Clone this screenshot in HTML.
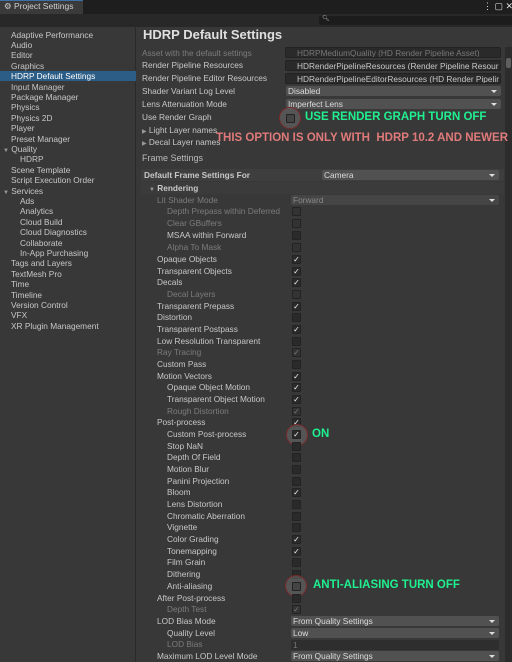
<!DOCTYPE html>
<html><head><meta charset="utf-8"><style>
*{margin:0;padding:0;box-sizing:border-box}
body{width:512px;height:662px;background:#383838;font-family:"Liberation Sans",sans-serif;font-size:8.3px;color:#c8c8c8;position:relative;overflow:hidden}
.a{position:absolute;white-space:nowrap;line-height:11px}
.s{left:11px}
.d{color:#7c7c7c}
.cb{position:absolute;left:292px;width:9px;height:9px;background:#2a2a2a;border:1px solid #232323;border-radius:1px;color:#eee;font-size:8px;line-height:8px;text-align:center}
.cb.dm{background:#333;color:#777}
.dd{position:absolute;left:291px;width:208px;height:10px;background:#515151;border-radius:2px;line-height:10px;padding-left:2px;color:#ddd}
.dd:after{content:"";position:absolute;right:4px;top:4px;border-left:3px solid transparent;border-right:3px solid transparent;border-top:3px solid #ddd}
.dd.dis{background:#454545;color:#888}
.fld{position:absolute;left:285px;width:216px;height:11px;background:#2a2a2a;border:1px solid #222;border-radius:2px;line-height:10px;padding-left:11px;white-space:nowrap;overflow:hidden}
.g{position:absolute;white-space:nowrap;color:#1ff090;font-weight:bold;font-size:11.5px;line-height:13px;font-family:"Liberation Sans",sans-serif;transform-origin:0 0}
.ring{position:absolute;width:22px;height:22px;border-radius:50%;border:1.5px solid #7a2a2a;background:rgba(110,110,110,.55)}
</style></head><body>
<div style="position:absolute;left:0;top:0;width:512px;height:14px;background:#1e1e1e"></div>
<div style="position:absolute;left:0;top:0;width:83px;height:14px;background:#3a3a3a;border-top:1px solid #3d6fa8"></div>
<div class="a" style="left:4px;top:1px;color:#d0d0d0;font-size:8.5px">⚙ Project Settings</div>
<div class="a" style="left:483px;top:1px;color:#ddd;font-size:9px">⋮ ▢ ✕</div>
<div style="position:absolute;left:0;top:14px;width:512px;height:13px;background:#282828"></div>
<div style="position:absolute;left:319px;top:16px;width:193px;height:9px;background:#1c1c1c;border-radius:2px"></div>
<div class="a" style="left:322px;top:14px;font-size:6px;color:#aaa">🔍︎</div>
<div style="position:absolute;left:0;top:27px;width:136px;height:635px;background:#383838;border-right:1px solid #2a2a2a"></div>
<div style="position:absolute;left:0;top:71px;width:136px;height:10px;background:#2c5d87"></div>
<div class="a s" style="top:30px">Adaptive Performance</div>
<div class="a s" style="top:40px">Audio</div>
<div class="a s" style="top:50px">Editor</div>
<div class="a s" style="top:61px">Graphics</div>
<div class="a s" style="top:71px;color:#fff">HDRP Default Settings</div>
<div class="a s" style="top:82px">Input Manager</div>
<div class="a s" style="top:92px">Package Manager</div>
<div class="a s" style="top:102px">Physics</div>
<div class="a s" style="top:113px">Physics 2D</div>
<div class="a s" style="top:123px">Player</div>
<div class="a s" style="top:134px">Preset Manager</div>
<div class="a" style="left:3px;top:144px"><span style="font-size:6px;color:#999">▼</span> Quality</div>
<div class="a" style="left:20px;top:154px">HDRP</div>
<div class="a s" style="top:165px">Scene Template</div>
<div class="a s" style="top:175px">Script Execution Order</div>
<div class="a" style="left:3px;top:186px"><span style="font-size:6px;color:#999">▼</span> Services</div>
<div class="a" style="left:20px;top:196px">Ads</div>
<div class="a" style="left:20px;top:206px">Analytics</div>
<div class="a" style="left:20px;top:217px">Cloud Build</div>
<div class="a" style="left:20px;top:227px">Cloud Diagnostics</div>
<div class="a" style="left:20px;top:238px">Collaborate</div>
<div class="a" style="left:20px;top:248px">In-App Purchasing</div>
<div class="a s" style="top:258px">Tags and Layers</div>
<div class="a s" style="top:269px">TextMesh Pro</div>
<div class="a s" style="top:279px">Time</div>
<div class="a s" style="top:290px">Timeline</div>
<div class="a s" style="top:300px">Version Control</div>
<div class="a s" style="top:310px">VFX</div>
<div class="a s" style="top:321px">XR Plugin Management</div>

<div style="position:absolute;left:505px;top:47px;width:7px;height:615px;background:#2c2c2c"></div>
<div style="position:absolute;left:506px;top:58px;width:5px;height:10px;background:#5f5f5f;border-radius:2px"></div>

<div class="a" style="left:143px;top:27px;font-size:13px;line-height:16px;font-weight:bold;color:#e0e0e0">HDRP Default Settings</div>
<div class="a d" style="left:142px;top:48px">Asset with the default settings</div>
<div class="fld" style="top:47px;color:#777">HDRPMediumQuality (HD Render Pipeline Asset)</div>
<div class="a" style="left:142px;top:60px">Render Pipeline Resources</div>
<div class="fld" style="top:60px">HDRenderPipelineResources (Render Pipeline Resour</div>
<div class="a" style="left:142px;top:73px">Render Pipeline Editor Resources</div>
<div class="fld" style="top:73px">HDRenderPipelineEditorResources (HD Render Pipelir</div>
<div class="a" style="left:142px;top:86px">Shader Variant Log Level</div>
<div class="dd" style="left:286px;width:215px;top:86px">Disabled</div>
<div class="a" style="left:142px;top:99px">Lens Attenuation Mode</div>
<div class="dd" style="left:286px;width:215px;top:99px">Imperfect Lens</div>
<div class="a" style="left:142px;top:112px">Use Render Graph</div>
<div class="ring" style="left:279px;top:107px"></div>
<div class="cb" style="left:286px;top:114px;background:#444"></div>
<div class="g" style="left:305px;top:111px">USE RENDER GRAPH TURN OFF</div>
<div class="a" style="left:142px;top:125px"><span style="font-size:6px;color:#999">▶</span> Light Layer names</div>
<div class="a" style="left:142px;top:137px"><span style="font-size:6px;color:#999">▶</span> Decal Layer names</div>
<div class="g" style="left:216px;top:132px;color:#e07a7a">THIS OPTION IS ONLY WITH &nbsp;HDRP 10.2 AND NEWER</div>

<div class="a" style="left:142px;top:153px;font-size:9px;color:#bbb">Frame Settings</div>
<div style="position:absolute;left:141px;top:169px;width:363px;height:12px;background:#3e3e3e"></div>
<div class="a" style="left:144px;top:170px;font-weight:bold">Default Frame Settings For</div>
<div class="dd" style="left:322px;width:177px;top:170px">Camera</div>
<div style="position:absolute;left:141px;top:182px;width:363px;height:12px;background:#3b3b3b"></div>
<div class="a" style="left:149px;top:183px;font-weight:bold"><span style="font-size:6px;color:#999">▼</span> Rendering</div>

<div class="a d" style="left:157px;top:195px">Lit Shader Mode</div><div class="dd dis" style="top:195px">Forward</div>
<div class="a d" style="left:167px;top:206px">Depth Prepass within Deferred</div><div class="cb dm" style="top:207px"></div>
<div class="a d" style="left:167px;top:218px">Clear GBuffers</div><div class="cb dm" style="top:219px"></div>
<div class="a" style="left:167px;top:230px">MSAA within Forward</div><div class="cb" style="top:231px"></div>
<div class="a d" style="left:167px;top:242px">Alpha To Mask</div><div class="cb dm" style="top:243px"></div>
<div class="a" style="left:157px;top:254px">Opaque Objects</div><div class="cb" style="top:255px">✓</div>
<div class="a" style="left:157px;top:266px">Transparent Objects</div><div class="cb" style="top:267px">✓</div>
<div class="a" style="left:157px;top:277px">Decals</div><div class="cb" style="top:278px">✓</div>
<div class="a d" style="left:167px;top:289px">Decal Layers</div><div class="cb dm" style="top:290px"></div>
<div class="a" style="left:157px;top:301px">Transparent Prepass</div><div class="cb" style="top:302px">✓</div>
<div class="a" style="left:157px;top:312px">Distortion</div><div class="cb" style="top:313px"></div>
<div class="a" style="left:157px;top:324px">Transparent Postpass</div><div class="cb" style="top:325px">✓</div>
<div class="a" style="left:157px;top:336px">Low Resolution Transparent</div><div class="cb" style="top:337px"></div>
<div class="a d" style="left:157px;top:347px">Ray Tracing</div><div class="cb dm" style="top:348px">✓</div>
<div class="a" style="left:157px;top:359px">Custom Pass</div><div class="cb" style="top:360px"></div>
<div class="a" style="left:157px;top:371px">Motion Vectors</div><div class="cb" style="top:372px">✓</div>
<div class="a" style="left:167px;top:382px">Opaque Object Motion</div><div class="cb" style="top:383px">✓</div>
<div class="a" style="left:167px;top:394px">Transparent Object Motion</div><div class="cb" style="top:395px">✓</div>
<div class="a d" style="left:167px;top:406px">Rough Distortion</div><div class="cb dm" style="top:407px">✓</div>
<div class="a" style="left:157px;top:417px">Post-process</div><div class="cb" style="top:418px">✓</div>
<div class="ring" style="left:286px;top:424px"></div>
<div class="a" style="left:167px;top:429px">Custom Post-process</div><div class="cb" style="top:430px">✓</div>
<div class="g" style="left:312px;top:428px">ON</div>
<div class="a" style="left:167px;top:441px">Stop NaN</div><div class="cb" style="top:442px"></div>
<div class="a" style="left:167px;top:452px">Depth Of Field</div><div class="cb" style="top:453px"></div>
<div class="a" style="left:167px;top:464px">Motion Blur</div><div class="cb" style="top:465px"></div>
<div class="a" style="left:167px;top:476px">Panini Projection</div><div class="cb" style="top:477px"></div>
<div class="a" style="left:167px;top:487px">Bloom</div><div class="cb" style="top:488px">✓</div>
<div class="a" style="left:167px;top:499px">Lens Distortion</div><div class="cb" style="top:500px"></div>
<div class="a" style="left:167px;top:511px">Chromatic Aberration</div><div class="cb" style="top:512px"></div>
<div class="a" style="left:167px;top:522px">Vignette</div><div class="cb" style="top:523px"></div>
<div class="a" style="left:167px;top:534px">Color Grading</div><div class="cb" style="top:535px">✓</div>
<div class="a" style="left:167px;top:546px">Tonemapping</div><div class="cb" style="top:547px">✓</div>
<div class="a" style="left:167px;top:557px">Film Grain</div><div class="cb" style="top:558px"></div>
<div class="a" style="left:167px;top:569px">Dithering</div><div class="cb" style="top:570px"></div>
<div class="ring" style="left:285px;top:575px"></div>
<div class="a" style="left:167px;top:581px">Anti-aliasing</div><div class="cb" style="top:582px;background:#444"></div>
<div class="g" style="left:313px;top:579px">ANTI-ALIASING TURN OFF</div>
<div class="a" style="left:157px;top:593px">After Post-process</div><div class="cb" style="top:594px"></div>
<div class="a d" style="left:167px;top:604px">Depth Test</div><div class="cb dm" style="top:605px">✓</div>
<div class="a" style="left:157px;top:616px">LOD Bias Mode</div><div class="dd" style="top:616px">From Quality Settings</div>
<div class="a" style="left:167px;top:628px">Quality Level</div><div class="dd" style="top:628px">Low</div>
<div class="a d" style="left:167px;top:639px">LOD Bias</div><div style="position:absolute;left:291px;top:640px;width:208px;height:10px;background:#2e2e2e;color:#777;line-height:10px;padding-left:2px">1</div>
<div class="a" style="left:157px;top:651px">Maximum LOD Level Mode</div><div class="dd" style="top:651px">From Quality Settings</div>
</body></html>
